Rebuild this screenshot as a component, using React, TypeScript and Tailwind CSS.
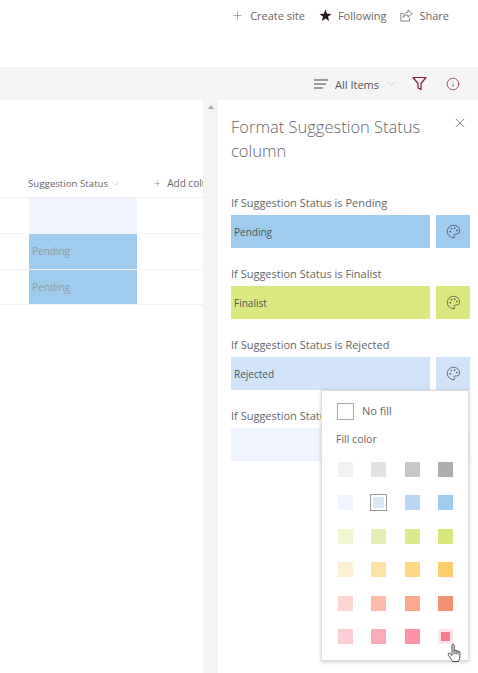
import { Plus, ChevronDown, Info, X, Palette } from 'lucide-react';

const FONT = "font-['Open_Sans','Noto_Sans',sans-serif]";

const RULES = [
  { label: 'If Suggestion Status is Pending', text: 'Pending', bg: 'bg-[#9fcbee]' },
  { label: 'If Suggestion Status is Finalist', text: 'Finalist', bg: 'bg-[#dbe77f]' },
  { label: 'If Suggestion Status is Rejected', text: 'Rejected', bg: 'bg-[#d0e3f9]' },
];

const COLORS = [
  '#f1f1f1', '#e1e1e1', '#c6c6c6', '#aeaeae',
  '#eff3fd', '#dbe6f6', '#b8d6f3', '#9fcbee',
  '#eef5cf', '#e4f0b3', '#dbe98f', '#d8e679',
  '#fdf0d2', '#fde2a8', '#fdd688', '#fdcd6c',
  '#fcd5d0', '#fbbba9', '#f9a98c', '#f19273',
  '#fdcdd6', '#f7abbb', '#fb92a5', '#f47b90',
];

function FilterIcon() {
  return (
    <svg width="15" height="15" viewBox="0 0 15 15" fill="none" stroke="#7a1f35" strokeWidth="1.2">
      <path d="M1 1.5h13L9 7.5v6l-3-1.5V7.5z" strokeLinejoin="round" />
    </svg>
  );
}

function StarIcon() {
  return (
    <svg width="13" height="13" viewBox="0 0 13 13" fill="#2a1a20">
      <path d="M6.5.5l1.6 4.2 4.4.2-3.5 2.8 1.2 4.3-3.7-2.5L2.8 12 4 7.7.5 4.9l4.4-.2z" />
    </svg>
  );
}

function ShareIcon() {
  return (
    <svg width="13" height="13" viewBox="0 0 13 13" fill="none" stroke="#777" strokeWidth="0.9">
      <path d="M3.5 4.5H.8v7.5h8.7V9" />
      <path d="M8 1l4.3 3.6L8 8V6c-2.5 0-4 .8-5 2.6C3.3 5.8 5 3.6 8 3.2z" strokeLinejoin="round" />
    </svg>
  );
}

function HandCursor() {
  return (
    <svg width="16" height="20" viewBox="0 0 16 20" fill="#fff" stroke="#333" strokeWidth="0.9" strokeLinejoin="round">
      <path d="M5 10.5V2.2c0-1.4 2.1-1.4 2.1 0v5.6c0-1.2 2-1.2 2 0v.6c0-1.1 1.9-1.1 1.9 0v.7c0-1 1.9-1 1.9.1v4.6c0 2.2-1.1 3.2-1.5 4.7H5.6c-.5-1.3-1.4-2.4-3-4.6-1.2-1.7-2-2.9-1.1-3.5.8-.5 1.6.1 3.5 2z" />
      <path d="M7.1 8v3.4M9.1 8.4v3M11 9.1v2.3" fill="none" />
    </svg>
  );
}

export default function App() {
  return (
    <div className={`${FONT} w-[478px] h-[673px] overflow-hidden bg-white flex flex-col text-[#555]`}>
      <div className="h-[67px] flex-shrink-0 flex justify-end items-start pt-[8px] pr-[29px] text-[11px] leading-[15px] text-[#666]">
        <div className="flex items-center gap-[6px]">
          <Plus className="w-[13px] h-[13px]" strokeWidth={1} />
          <span>Create site</span>
        </div>
        <div className="flex items-center gap-[6px] ml-[14px]">
          <StarIcon />
          <span>Following</span>
        </div>
        <div className="flex items-center gap-[6px] ml-[14px]">
          <ShareIcon />
          <span>Share</span>
        </div>
      </div>

      <div className="h-[33px] flex-shrink-0 bg-[#f4f4f4] flex items-center justify-end pr-[18px] text-[11px] text-[#555]">
        <svg width="14" height="10" viewBox="0 0 14 10" stroke="#444" strokeWidth="1" className="mr-[7px]">
          <path d="M0 1h14M0 5h12M0 9h9" />
        </svg>
        <span className="pt-[3px]">All Items</span>
        <ChevronDown className="w-[13px] h-[13px] ml-[6px] text-[#aaa]" strokeWidth={1} />
        <div className="ml-[14px]"><FilterIcon /></div>
        <Info className="w-[14px] h-[14px] ml-[19px] text-[#7a1f35]" strokeWidth={1.2} />
      </div>

      <div className="flex-1 flex min-h-0">
        <div className="w-[203px] flex-shrink-0 overflow-hidden">
          <div className="w-max h-[97px] flex items-end pb-[6px] pl-[28px] text-[9.7px] leading-[15px] text-[#666] whitespace-nowrap">
            <span>Suggestion Status</span>
            <ChevronDown className="w-[13px] h-[13px] ml-[1px] mb-[1px] text-[#aaa]" strokeWidth={1} />
            <Plus className="w-[9px] h-[9px] ml-[31px] mb-[3px]" strokeWidth={1} />
            <span className="ml-[5px] text-[10px]">Add column</span>
          </div>
          <div className="h-[36px] border-t border-[#eee] pl-[29px]">
            <div className="w-[108px] h-full bg-[#eff3fd]" />
          </div>
          <div className="h-[36px] border-t border-[#f4f4f4] pl-[29px]">
            <div className="w-[108px] h-[35px] bg-[#9fcbee] flex items-center pl-[3px] text-[10px] text-[#8d9ea9]">Pending</div>
          </div>
          <div className="h-[36px] border-y border-[#f0f0f0] pl-[29px]">
            <div className="w-[108px] h-full bg-[#9fcbee] flex items-center pl-[3px] text-[10px] text-[#8d9ea9]">Pending</div>
          </div>
        </div>

        <div className="w-[15px] flex-shrink-0 bg-[#f4f4f4] flex justify-center pt-[5px]">
          <div className="w-0 h-0 border-x-[3px] border-x-transparent border-b-[4px] border-b-[#aaa]" />
        </div>

        <div className="relative flex-1 pl-[13px] pr-[8px]">
          <div className="flex justify-between items-start pt-[15px] pr-[2px]">
            <h2 className="w-[200px] text-[16.5px] leading-[24px] font-light text-[#666]">Format Suggestion Status column</h2>
            <X className="w-[16px] h-[16px] text-[#555]" strokeWidth={1} />
          </div>

          <div className="mt-[32px] flex flex-col gap-[18px]">
            {RULES.map((r) => (
              <div key={r.label}>
                <div className="text-[11px] leading-[16px] h-[20px] text-[#666] whitespace-nowrap">{r.label}</div>
                <div className="flex gap-[6px] h-[33px]">
                  <div className={`${r.bg} w-[199px] flex items-center pl-[3px] pt-[1px] text-[10px] text-[#4a5a5a]`}>{r.text}</div>
                  <div className={`${r.bg} w-[34px] flex items-center justify-center`}>
                    <Palette className="w-[15px] h-[15px] text-[#333]" strokeWidth={1} />
                  </div>
                </div>
              </div>
            ))}
            <div>
              <div className="w-[90px] overflow-hidden text-[11px] leading-[16px] h-[20px] text-[#666] whitespace-nowrap">If Suggestion Status is Won</div>
              <div className="h-[33px] w-[239px] bg-[#eff3fd]" />
            </div>
          </div>

          <div className="absolute left-[103px] top-[290px] w-[148px] h-[271px] bg-white border border-[#ddd] shadow-[0_1px_4px_rgba(0,0,0,0.2)] pl-[15px] pr-[15px] pt-[12px]">
            <div className="flex items-center h-[17px]">
              <div className="w-[17px] h-[17px] border border-[#aaa]" />
              <span className="ml-[8px] text-[11px] text-[#666]">No fill</span>
            </div>
            <div className="mt-[11px] -ml-[1px] text-[10.5px] leading-[16px] text-[#666]">Fill color</div>
            <div className="mt-[15px] grid grid-cols-[repeat(4,15px)] gap-x-[18.3px] gap-y-[18.4px] pl-[1px]">
              {COLORS.map((c, i) => (
                <div key={c} className="relative w-[15px] h-[15px]">
                  {i === 5 && <div className="absolute -inset-[1px] border border-[#999]" />}
                  {i === 23 && <div className="absolute inset-0 bg-[#f9e6ea]" />}
                  <div
                    className={i === 23 ? 'absolute inset-[3px]' : i === 5 ? 'absolute inset-[2px]' : 'absolute inset-0'}
                    style={{ backgroundColor: c }}
                  />
                </div>
              ))}
            </div>
          </div>

          <div className="absolute left-[229px] top-[543px]"><HandCursor /></div>
        </div>
      </div>
    </div>
  );
}
